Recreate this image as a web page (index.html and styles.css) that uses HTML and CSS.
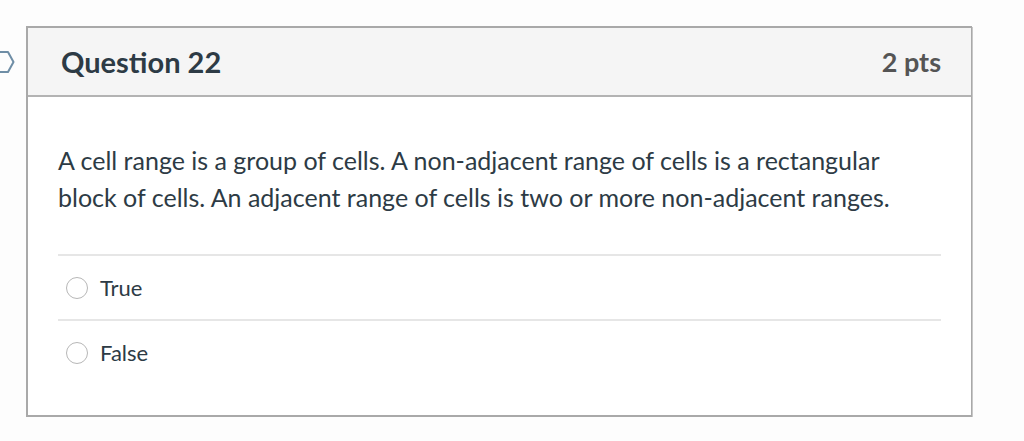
FILE: index.html
```html
<!DOCTYPE html>
<html lang="en">
<head>
<meta charset="utf-8">
<title>Question 22</title>
<link rel="stylesheet" href="styles.css">
</head>
<body>
<div class="page">
  <svg class="flag" width="16" height="24" viewBox="0 0 16 24" aria-hidden="true">
    <polyline points="-2,2 8,2 13.5,12 8,22 -2,22" fill="none" stroke="#6f8ea6" stroke-width="2" stroke-linejoin="round"/>
  </svg>
  <div class="question">
    <div class="q-header">
      <h2 class="q-title">Question 22</h2>
      <span class="q-pts">2 pts</span>
    </div>
    <div class="q-body">
      <p class="q-text">A cell range is a group of cells. A non-adjacent range of cells is a rectangular block of cells. An adjacent range of cells is two or more non-adjacent ranges.</p>
      <div class="answers">
        <label class="answer"><span class="radio"></span><span class="a-label">True</span></label>
        <label class="answer"><span class="radio"></span><span class="a-label">False</span></label>
      </div>
    </div>
  </div>
</div>
</body>
</html>
```
FILE: styles.css
```css
html, body {
  margin: 0;
  padding: 0;
  background: #fdfdfd;
}
body {
  font-family: Lato, "Open Sans", sans-serif;
  color: #2d3b45;
}
.page {
  position: relative;
  padding: 26px 0 0 26px;
  width: 946px;
}
.flag {
  position: absolute;
  left: 0;
  top: 50px;
}
.question {
  border: 1px solid #a9a9a9;
  border-width: 2px 1px 2px 2px;
  background: #fff;
  box-shadow: 1px 1px 0 #c8c8c8;
  height: 391px;
  box-sizing: border-box;
}
.q-header {
  display: flex;
  justify-content: space-between;
  align-items: center;
  height: 69px;
  box-sizing: border-box;
  padding: 0 30px 0 33px;
  background: #f5f5f5;
  border-bottom: 2px solid #b3b3b3;
}
.q-title {
  margin: 0;
  font-size: 29px;
  font-weight: 700;
  color: #2d3b45;
}
.q-pts {
  font-size: 27px;
  font-weight: 700;
  color: #555;
}
.q-body {
  padding: 45px 30px 0 30px;
}
.q-text {
  margin: 0;
  max-width: 860px;
  font-size: 25px;
  line-height: 37px;
  color: #2d3b45;
}
.answers {
  margin-top: 38px;
}
.answer {
  display: flex;
  align-items: center;
  height: 65px;
  box-sizing: border-box;
  border-top: 2px solid #e6e6e6;
  padding-left: 8px;
  gap: 12px;
  font-size: 22px;
}
.radio {
  width: 22px;
  height: 22px;
  border: 1px solid #b7b7b7;
  border-radius: 50%;
  background: #fff;
  box-sizing: border-box;
}
.a-label {
  color: #2d3b45;
}
```
